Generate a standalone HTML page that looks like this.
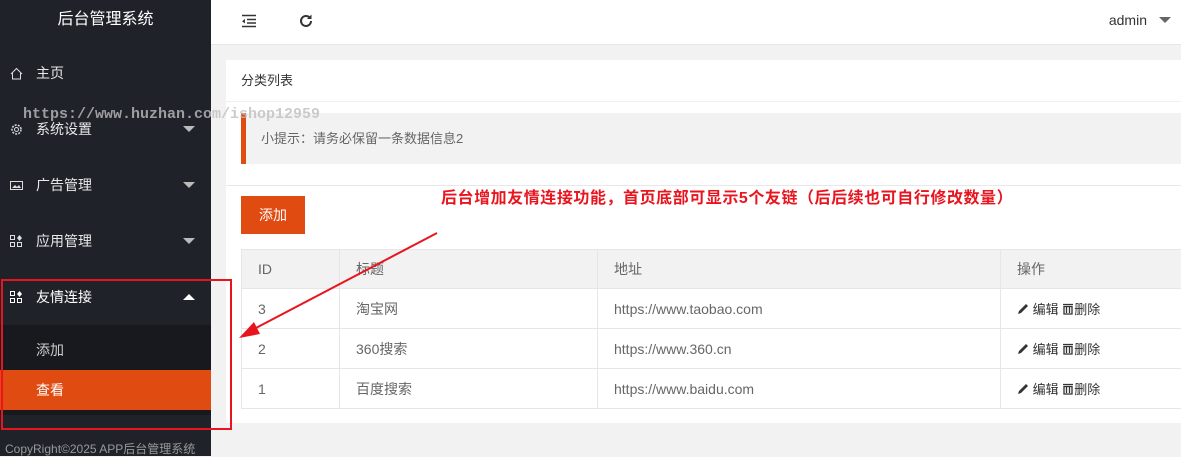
<!DOCTYPE html>
<html><head><meta charset="utf-8"><style>
*{margin:0;padding:0;box-sizing:border-box}
body{width:1181px;height:456px;overflow:hidden;background:#f2f2f2;font-family:"Liberation Sans","Noto Sans CJK SC",sans-serif;font-size:14px;color:#666;position:relative}
.side{position:absolute;left:0;top:0;width:211px;height:456px;background:#20222a;color:#fff}
.logo{height:45px;line-height:40px;text-align:center;font-size:16px;color:#fff}
.item{position:absolute;left:0;width:211px;height:56px;line-height:56px;padding-left:36px;color:#e8e8e8}
.ic{position:absolute;left:10px;top:22px;width:13px;height:13px}
.car{position:absolute;right:16px;top:25px;width:0;height:0;border-left:6px solid transparent;border-right:6px solid transparent;border-top:6px solid #bbb}
.car.up{border-top:none;border-bottom:6px solid #fff}
.sub{position:absolute;left:0;width:211px;height:45px;line-height:50px;padding-left:36px}
.head{position:absolute;left:211px;top:0;right:0;height:45px;background:#fff;border-bottom:1px solid #e8e8e8}
.card{position:absolute;left:226px;top:60px;right:0;height:363px;background:#fff}
table{border-collapse:collapse;position:absolute;left:15px;top:189px;width:950px}
td{border:1px solid #e6e6e6;height:40px;padding-left:16px;font-size:14px;color:#666}
tr.h td{background:#f2f2f2;height:39px}
.op{color:#333;font-size:13px}
.op svg{vertical-align:-1px}
</style></head><body>
<div class="side">
<div class="logo">后台管理系统</div>
<div class="item" style="top:45px"><svg class="ic" viewBox="0 0 13 13"><path d="M1 7L6.5 1.5 12 7M2.5 6v6h8V6" fill="none" stroke="#ddd"/></svg>主页</div>
<div class="item" style="top:101px"><svg class="ic" viewBox="0 0 13 13"><circle cx="6.5" cy="6.5" r="4.5" fill="none" stroke="#ddd" stroke-width="1.5" stroke-dasharray="2 1.2"/><circle cx="6.5" cy="6.5" r="2" fill="none" stroke="#ddd"/></svg>系统设置<span class="car"></span></div>
<div class="item" style="top:157px"><svg class="ic" viewBox="0 0 13 13"><rect x="0.5" y="2.5" width="12" height="8" fill="none" stroke="#ddd"/><path d="M2 9l3-3 2 2 2-2 2 3z" fill="#ddd"/></svg>广告管理<span class="car"></span></div>
<div class="item" style="top:213px"><svg class="ic" viewBox="0 0 13 13"><rect x="0.5" y="0.5" width="4" height="4" fill="none" stroke="#ddd"/><rect x="0.5" y="7.5" width="4" height="4" fill="none" stroke="#ddd"/><rect x="7.5" y="7.5" width="4" height="4" fill="none" stroke="#ddd"/><path d="M9.5 0l2.5 3-2.5 3-2.5-3z" fill="#ddd"/></svg>应用管理<span class="car"></span></div>
<div class="item" style="top:269px;color:#fff"><svg class="ic" viewBox="0 0 13 13"><rect x="0.5" y="0.5" width="4" height="4" fill="none" stroke="#fff"/><rect x="0.5" y="7.5" width="4" height="4" fill="none" stroke="#fff"/><rect x="7.5" y="7.5" width="4" height="4" fill="none" stroke="#fff"/><path d="M9.5 0l2.5 3-2.5 3-2.5-3z" fill="#fff"/></svg>友情连接<span class="car up"></span></div>
<div style="position:absolute;top:325px;left:0;width:211px;height:90px;background:#18191e"></div>
<div class="sub" style="top:325px;color:#ccc">添加</div>
<div class="sub" style="top:370px;height:40px;line-height:40px;background:#e04b12;color:#fff">查看</div>
<div style="position:absolute;left:5px;top:440px;font-size:12px;color:#999">CopyRight©2025 APP后台管理系统</div>
</div>
<div class="head">
<svg style="position:absolute;left:30px;top:14px" width="16" height="14" viewBox="0 0 16 14"><path d="M1 1.5h14M6 5.5h9M6 9h9M1 12.5h14" stroke="#333" stroke-width="1.6"/><path d="M4 5L1 7.2 4 9.4z" fill="#333"/></svg>
<svg style="position:absolute;left:87px;top:13px" width="16" height="16" viewBox="0 0 16 16"><path d="M13 8a5 5 0 1 1-1.5-3.6" fill="none" stroke="#333" stroke-width="2"/><path d="M13.5 1.5v4.5h-4.5z" fill="#333"/></svg>
<span style="position:absolute;right:34px;top:12px;color:#333;font-size:14px">admin</span>
<span style="position:absolute;right:10px;top:17px;border-left:6px solid transparent;border-right:6px solid transparent;border-top:6px solid #666"></span>
</div>
<div class="card">
<div style="height:42px;line-height:42px;padding-left:15px;color:#333;font-size:13px;border-bottom:1px solid #f0f0f0">分类列表</div>
<div style="position:absolute;left:15px;top:53px;right:0;height:51px;background:#f2f2f2;border-left:5px solid #e04b12;line-height:51px;padding-left:15px;font-size:13px;color:#666">小提示：请务必保留一条数据信息2</div>
<div style="position:absolute;left:0;right:0;top:125px;border-top:1px solid #e8e8e8"></div>
<div style="position:absolute;left:15px;top:136px;width:64px;height:38px;background:#e04b12;color:#fff;line-height:38px;text-align:center;font-size:14px">添加</div>
<table>
<tr class="h"><td style="width:98px">ID</td><td style="width:258px">标题</td><td style="width:403px">地址</td><td>操作</td></tr>
<tr><td>3</td><td>淘宝网</td><td>https://www.taobao.com</td><td class="op"><svg width="12" height="12" viewBox="0 0 12 12"><path d="M1 11l1-3 7-7 2 2-7 7z" fill="#333"/></svg> 编辑 <svg width="12" height="12" viewBox="0 0 12 12"><path d="M1 1.5h10M2 3.5h8v7.5h-8zM4.5 4v6M7.5 4v6" fill="none" stroke="#333" stroke-width="1.3"/></svg>删除</td></tr>
<tr><td>2</td><td>360搜索</td><td>https://www.360.cn</td><td class="op"><svg width="12" height="12" viewBox="0 0 12 12"><path d="M1 11l1-3 7-7 2 2-7 7z" fill="#333"/></svg> 编辑 <svg width="12" height="12" viewBox="0 0 12 12"><path d="M1 1.5h10M2 3.5h8v7.5h-8zM4.5 4v6M7.5 4v6" fill="none" stroke="#333" stroke-width="1.3"/></svg>删除</td></tr>
<tr><td>1</td><td>百度搜索</td><td>https://www.baidu.com</td><td class="op"><svg width="12" height="12" viewBox="0 0 12 12"><path d="M1 11l1-3 7-7 2 2-7 7z" fill="#333"/></svg> 编辑 <svg width="12" height="12" viewBox="0 0 12 12"><path d="M1 1.5h10M2 3.5h8v7.5h-8zM4.5 4v6M7.5 4v6" fill="none" stroke="#333" stroke-width="1.3"/></svg>删除</td></tr>
</table>
</div>
<div style="position:absolute;left:23px;top:106px;font-family:'Liberation Mono',monospace;font-size:15px;color:rgba(190,190,190,0.8);white-space:nowrap;font-weight:bold">https://www.huzhan.com/ishop12959</div>
<div style="position:absolute;left:441px;top:184px;color:#e8141e;font-weight:bold;font-size:16px;letter-spacing:0.55px;white-space:nowrap">后台增加友情连接功能，首页底部可显示5个友链（后后续也可自行修改数量）</div>
<svg style="position:absolute;left:0;top:0" width="1181" height="456"><path d="M437 233L252 330" stroke="#e8141e" stroke-width="2"/><path d="M239 338l15-16 6 12z" fill="#e8141e"/><rect x="2" y="280" width="229" height="149" fill="none" stroke="#e8141e" stroke-width="2"/></svg>
</body></html>
